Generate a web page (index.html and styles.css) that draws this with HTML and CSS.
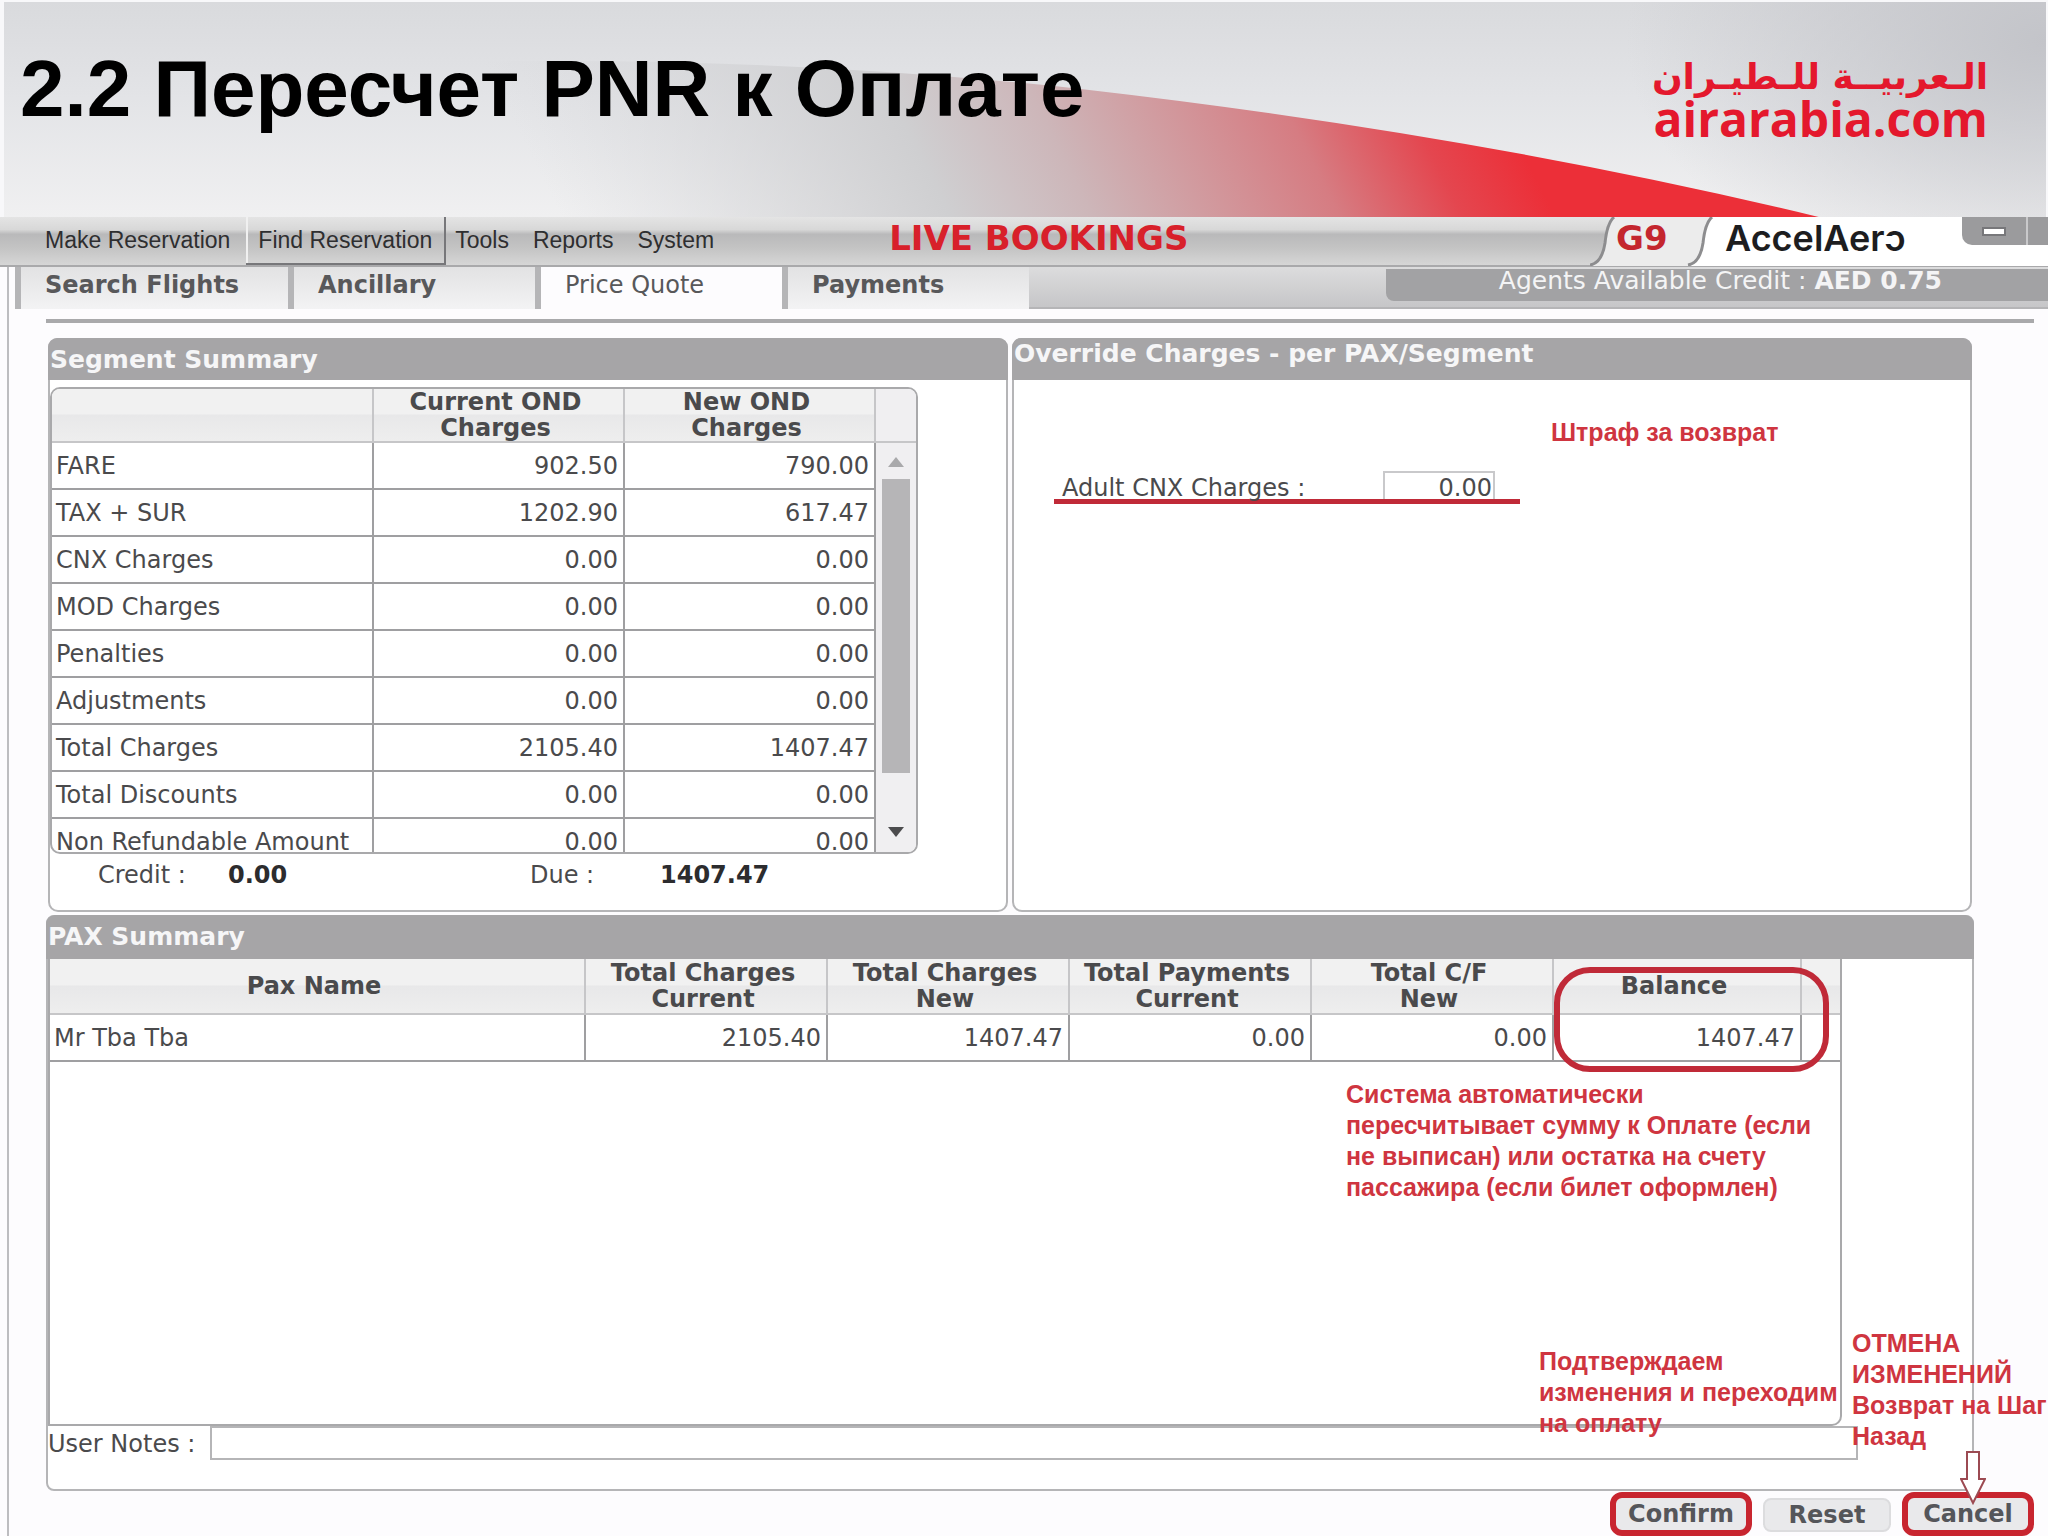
FILE: index.html
```html
<!DOCTYPE html>
<html lang="ru">
<head>
<meta charset="utf-8">
<title>2.2 Пересчет PNR к Оплате</title>
<link rel="stylesheet" href="styles.css">
</head>
<body>
<header class="banner">
  <svg class="swoosh" viewBox="0 0 2048 217" preserveAspectRatio="none" aria-hidden="true">
    <defs>
      <linearGradient id="sweep" gradientUnits="userSpaceOnUse" x1="600" y1="300" x2="1423" y2="-111">
        <stop offset="0" stop-color="#d4d5d8" stop-opacity="0"/>
        <stop offset="0.38" stop-color="#cfcfd1"/>
        <stop offset="0.52" stop-color="#cdb6b9"/>
        <stop offset="0.76" stop-color="#d67c82"/>
        <stop offset="0.88" stop-color="#e4464f"/>
        <stop offset="0.97" stop-color="#ec2f38"/>
      </linearGradient>
    </defs>
    <path d="M300 66 Q700 46 1082 88 Q1480 134 1820 217 L300 217 Z" fill="url(#sweep)"/>
  </svg>
  <h1 class="banner-title">2.2 Пересчет PNR к Оплате</h1>
  <div class="brand">
    <span class="brand-ar" lang="ar" dir="rtl">الـعربيــة للـطيـران</span>
    <span class="brand-en">airarabia.com</span>
  </div>
</header>

<nav class="menubar">
  <a class="menu-item" href="#">Make Reservation</a>
  <a class="menu-item menu-item-open" href="#">Find Reservation</a>
  <a class="menu-item" href="#">Tools</a>
  <a class="menu-item" href="#">Reports</a>
  <a class="menu-item" href="#">System</a>
  <strong class="live">LIVE BOOKINGS</strong>
  <div class="product">
    <svg class="product-shape" viewBox="0 0 458 49" preserveAspectRatio="none" aria-hidden="true">
      <path d="M0 49 Q12 46 15 26 Q17 6 24 0 H458 V49 Z" fill="#fff"/>
      <path d="M0 49 Q12 46 15 26 Q17 6 24 0 H122 Q115 6 113 26 Q110 46 98 49 Z" fill="#ececec"/>
      <path d="M0 48 Q12 46 15 26 Q17 6 24 0 M98 48 Q110 46 113 26 Q115 6 122 0" fill="none" stroke="#8d8d8f" stroke-width="3"/>
    </svg>
    <span class="carrier">G9</span>
    <span class="product-name">AccelAer<span class="open-o">o</span></span>
    <button class="win-button" type="button" aria-label="Minimize"><span class="win-dash"></span></button>
    <button class="win-button win-button-next" type="button" aria-label="Restore"></button>
  </div>
</nav>

<main class="frame">
  <div class="tabbar">
    <button class="tab" type="button">Search Flights</button>
    <button class="tab" type="button">Ancillary</button>
    <button class="tab tab-active" type="button">Price Quote</button>
    <button class="tab" type="button">Payments</button>
    <div class="tab-rest">
      <div class="credit-bar">Agents Available Credit : <b>AED 0.75</b></div>
    </div>
  </div>
  <hr class="rule">

  <div class="content">
    <div class="top-panels">
      <section class="panel">
        <h2 class="panel-title">Segment Summary</h2>
        <div class="segment-box">
          <table class="grid segment-grid">
            <colgroup><col class="c-label"><col class="c-val"><col class="c-val"></colgroup>
            <thead><tr><th></th><th>Current OND<br>Charges</th><th>New OND<br>Charges</th></tr></thead>
            <tbody>
              <tr><td>FARE</td><td>902.50</td><td>790.00</td></tr>
              <tr><td>TAX + SUR</td><td>1202.90</td><td>617.47</td></tr>
              <tr><td>CNX Charges</td><td>0.00</td><td>0.00</td></tr>
              <tr><td>MOD Charges</td><td>0.00</td><td>0.00</td></tr>
              <tr><td>Penalties</td><td>0.00</td><td>0.00</td></tr>
              <tr><td>Adjustments</td><td>0.00</td><td>0.00</td></tr>
              <tr><td>Total Charges</td><td>2105.40</td><td>1407.47</td></tr>
              <tr><td>Total Discounts</td><td>0.00</td><td>0.00</td></tr>
              <tr><td>Non Refundable Amount</td><td>0.00</td><td>0.00</td></tr>
            </tbody>
          </table>
          <div class="scroll">
            <div class="scroll-head"></div>
            <svg class="scroll-arrow" viewBox="0 0 16 10" aria-hidden="true"><path d="M0 10 L8 0 L16 10 Z" fill="#a9a9ab"/></svg>
            <div class="scroll-thumb"></div>
            <svg class="scroll-arrow scroll-arrow-down" viewBox="0 0 16 10" aria-hidden="true"><path d="M0 0 L8 10 L16 0 Z" fill="#4c4c4e"/></svg>
          </div>
        </div>
        <dl class="totals">
          <dt>Credit :</dt><dd>0.00</dd>
          <dt>Due :</dt><dd>1407.47</dd>
        </dl>
      </section>

      <section class="panel">
        <h2 class="panel-title panel-title-high">Override Charges - per PAX/Segment</h2>
        <p class="note note-fee">Штраф за возврат</p>
        <div class="override">
          <label for="cnx">Adult CNX Charges :</label>
          <input id="cnx" class="cnx" type="text" value="0.00">
        </div>
      </section>
    </div>

    <section class="panel pax-panel">
      <h2 class="panel-title">PAX Summary</h2>
      <div class="pax-box">
        <table class="grid pax-grid">
          <colgroup><col class="p-name"><col class="p-val"><col class="p-val"><col class="p-val"><col class="p-val"><col class="p-bal"><col></colgroup>
          <thead><tr><th>Pax Name</th><th>Total Charges<br>Current</th><th>Total Charges<br>New</th><th>Total Payments<br>Current</th><th>Total C/F<br>New</th><th>Balance</th><th></th></tr></thead>
          <tbody><tr><td>Mr Tba Tba</td><td>2105.40</td><td>1407.47</td><td>0.00</td><td>0.00</td><td>1407.47</td><td></td></tr></tbody>
        </table>
        <div class="ring"></div>
        <p class="note note-sum">Система автоматически<br>пересчитывает сумму к Оплате (если<br>не выписан) или остатка на счету<br>пассажира (если билет оформлен)</p>
        <p class="note note-confirm">Подтверждаем<br>изменения и переходим<br>на оплату</p>
      </div>
      <div class="notes-row">
        <label for="notes">User Notes :</label>
        <input id="notes" class="notes" type="text">
      </div>
      <p class="note note-cancel">ОТМЕНА<br>ИЗМЕНЕНИЙ<br>Возврат на Шаг<br>Назад</p>
      <svg class="arrow" viewBox="0 0 26 54" aria-hidden="true"><path d="M7 1 H19 V28 H25 L13 52 L1 28 H7 Z" fill="#fff" stroke="#9c4a52" stroke-width="2"/></svg>
    </section>
  </div>

  <div class="actions">
    <button class="action action-marked" type="button">Confirm</button>
    <button class="action" type="button">Reset</button>
    <button class="action action-marked action-cancel" type="button">Cancel</button>
  </div>
</main>
</body>
</html>
```
FILE: styles.css
```css
* { box-sizing: border-box; }

body {
  margin: 0;
  background: #fdfcfe;
  color: #4a4a4c;
  font: 24px/26px "DejaVu Sans", sans-serif;
  overflow-x: hidden;
}

h1, h2, p, dl, dd { margin: 0; }
button, input { font: inherit; color: inherit; }

/* Banner */
.banner {
  position: relative;
  display: flex;
  justify-content: space-between;
  height: 217px;
  padding: 43px 58px 0 16px;
  border: solid #f8f8fa;
  border-width: 2px 2px 0 4px;
  background:
    radial-gradient(ellipse 420px 260px at 100% 18%, #c3c4c9 0%, rgba(200, 201, 206, 0) 100%),
    linear-gradient(180deg, #d9dadd 0%, #e3e4e7 45%, #f0f0f1 100%);
}
.swoosh {
  position: absolute;
  inset: 0;
  width: 100%;
  height: 100%;
}
.banner-title {
  position: relative;
  color: #000;
  font: bold 80px/88px "Liberation Sans", sans-serif;
  white-space: nowrap;
}
.brand {
  position: relative;
  display: flex;
  flex-direction: column;
  align-items: flex-end;
  padding-top: 12px;
  color: #e4182d;
  white-space: nowrap;
}
.brand-ar { font: bold 36px/40px "DejaVu Sans", sans-serif; }
.brand-en { font: bold 48px/44px "Open Sans", sans-serif; }

/* Menu bar */
.menubar {
  display: flex;
  height: 50px;
  padding-left: 33px;
  border-bottom: 2px solid #a9a9ab;
  background: linear-gradient(180deg, #e4e4e4 0%, #d8d8d8 26%, #b9b9ba 36%, #c4c4c4 65%, #d6d6d6 100%);
  font: 23px/46px "Liberation Sans", sans-serif;
}
.menu-item {
  padding: 0 12px;
  color: #2e2e30;
  text-decoration: none;
  white-space: nowrap;
}
.menu-item-open {
  margin: 0 -3px 0 4px;
  border: solid #77777a;
  border-width: 0 2px 2px 0;
  box-shadow: inset 2px 0 #f0f0f0;
}
.live {
  margin-left: 163px;
  color: #d8202a;
  font: bold 34px/42px "DejaVu Sans", sans-serif;
  white-space: nowrap;
}
.product {
  position: relative;
  display: flex;
  align-items: flex-start;
  width: 458px;
  margin-left: auto;
}
.product-shape {
  position: absolute;
  inset: 0;
  width: 100%;
  height: 49px;
}
.carrier, .product-name { position: relative; font: bold 34px/42px "DejaVu Sans", sans-serif; }
.carrier { width: 135px; padding-left: 26px; color: #c4262e; }
.product-name { flex: 1; color: #1d1d1f; font: 600 36px/42px Inter, sans-serif; }
.open-o { position: relative; }
.open-o::after {
  content: "";
  position: absolute;
  left: 0;
  top: 20px;
  width: 8px;
  height: 8px;
  background: #fff;
}
.win-button {
  position: relative;
  display: grid;
  place-items: center;
  width: 64px;
  height: 28px;
  padding: 0;
  border: 0;
  border-bottom-left-radius: 10px;
  background: #9b9b9d;
}
.win-button-next { width: 22px; border-left: 2px solid #c9c9cb; border-radius: 0; }
.win-dash { width: 24px; height: 9px; border: 2px solid #77777a; background: #fff; }

/* Tabs */
.frame { margin-left: 7px; border-left: 2px solid #bdbdc0; }
.tabbar { display: flex; height: 42px; padding-left: 6px; }
.tab {
  width: 247px;
  padding: 0 0 6px 24px;
  border: 0;
  border-left: 6px solid #b5b5b7;
  background: linear-gradient(180deg, #e2e2e3, #f3f3f4);
  color: #58585a;
  font: bold 24px/26px "DejaVu Sans", sans-serif;
  text-align: left;
  white-space: nowrap;
}
.tab:first-child { width: 273px; }
.tab-active { background: #fdfcfe; font-weight: normal; }
.tab-rest {
  flex: 1;
  display: flex;
  justify-content: flex-end;
  align-items: flex-start;
  padding-top: 2px;
  border-bottom: 2px solid #b5b5b7;
  background: linear-gradient(180deg, #dcdcdd, #c6c6c8);
}
.credit-bar {
  width: 662px;
  height: 32px;
  padding-right: 106px;
  border-bottom-left-radius: 8px;
  background: #a2a2a4;
  color: #f4f4f5;
  font-size: 25px;
  line-height: 24px;
  text-align: right;
  white-space: nowrap;
}
.rule { height: 4px; margin: 10px 14px 15px 37px; border: 0; background: #a9a9ab; }

/* Panels */
.content { margin: 0 74px 0 37px; }
.top-panels { display: grid; grid-template-columns: 1fr 1fr; gap: 4px; margin: 0 2px 3px; }
.panel {
  position: relative;
  border: 2px solid #b5b5b7;
  border-radius: 10px;
  background: #fff;
}
.top-panels .panel { height: 574px; }
.panel-title {
  height: 42px;
  margin: -2px -2px 0;
  padding: 9px 2px 0;
  border-radius: 9px 9px 0 0;
  background: #a6a5a7;
  color: #f6f6f7;
  font: bold 25px/26px "DejaVu Sans", sans-serif;
  white-space: nowrap;
}
.panel-title-high { padding-top: 3px; }

/* Data tables */
.grid { border-collapse: collapse; table-layout: fixed; width: 100%; color: #4a4a4c; }
.grid th {
  padding: 0 10px 0 4px;
  border: solid #c6c6c8;
  border-width: 0 2px 2px 0;
  background: linear-gradient(180deg, #f1f1f1 48%, #e8e8e9 50%, #eeeeee 100%);
  font-weight: bold;
  white-space: nowrap;
}
.grid td {
  height: 47px;
  padding: 0 5px 0 4px;
  border: solid #9f9fa1;
  border-width: 0 2px 2px 0;
  text-align: right;
  white-space: nowrap;
}
.grid td:first-child { text-align: left; }

.segment-box {
  display: flex;
  width: 868px;
  max-width: 100%;
  height: 467px;
  margin-top: 7px;
  overflow: hidden;
  border: 2px solid #a9a9ab;
  border-radius: 10px;
}
.segment-grid { flex: 1; align-self: flex-start; }
.segment-grid th { height: 53px; }
.c-label { width: 39%; }
.scroll {
  display: flex;
  flex-direction: column;
  align-items: center;
  width: 40px;
  background: #f0eff1;
}
.scroll-head { align-self: stretch; height: 54px; border-bottom: 2px solid #c6c6c8; }
.scroll-arrow { width: 16px; height: 10px; margin: 14px 0 12px; }
.scroll-thumb { width: 28px; height: 294px; background: #b6b5b7; }
.scroll-arrow-down { margin: auto 0 15px; }

.totals { display: grid; grid-template-columns: 130px 302px 130px 1fr; padding: 8px 0 0 48px; }
.totals dd { color: #2c2c2e; font-weight: bold; }

/* Override form */
.override {
  display: flex;
  width: 466px;
  margin: 91px 0 0 40px;
  padding-left: 8px;
  border-bottom: 5px solid #c02a38;
}
.override label { width: 321px; line-height: 34px; height: 28px; }
.cnx {
  width: 112px;
  height: 28px;
  padding: 4px 1px 0 0;
  border: 2px solid #c9c9cb;
  border-bottom: 0;
  background: #fff;
  text-align: right;
}

/* Passenger panel */
.pax-panel { height: 576px; border-radius: 8px; }
.pax-panel .panel-title { height: 44px; }
.pax-box {
  position: relative;
  width: 1794px;
  max-width: 100%;
  height: 467px;
  border: 2px solid #a9a9ab;
  border-top: 0;
  border-bottom-right-radius: 10px;
}
.pax-grid th { height: 55px; }
.pax-grid th:last-child, .pax-grid td:last-child { border-right: 0; }
.p-name { width: 535px; }
.p-val { width: 242px; }
.p-bal { width: 248px; }
.notes-row { display: flex; line-height: 36px; }
.notes-row label { width: 162px; white-space: nowrap; }
.notes { width: 1648px; height: 34px; border: 2px solid #b5b5b7; background: #fff; }

/* Red remarks laid over the screen */
.note {
  position: absolute;
  color: #cf3540;
  font: bold 25px/31px "Liberation Sans", sans-serif;
  white-space: nowrap;
}
.note-fee { left: 537px; top: 77px; }
.note-sum { left: 1296px; top: 120px; }
.note-confirm { left: 1489px; top: 387px; }
.note-cancel { left: 1804px; top: 411px; }
.ring {
  position: absolute;
  right: 11px;
  top: 8px;
  width: 275px;
  height: 105px;
  border: 6px solid #c02a38;
  border-radius: 36px;
}
.arrow { position: absolute; right: -14px; bottom: -16px; width: 26px; height: 54px; z-index: 1; }

/* Actions */
.actions { display: flex; justify-content: flex-end; gap: 11px; padding: 0 14px 0 0; }
.action {
  width: 128px;
  height: 34px;
  margin-top: 7px;
  padding: 0;
  border: 2px solid #dcdcde;
  border-radius: 8px;
  background: #e9e9eb;
  color: #55565a;
  font: bold 24px/30px "DejaVu Sans", sans-serif;
}
.action-marked {
  width: 142px;
  height: 44px;
  margin-top: 1px;
  border: 6px solid #c8252f;
  border-radius: 12px;
}
.action-cancel { width: 132px; }
```
